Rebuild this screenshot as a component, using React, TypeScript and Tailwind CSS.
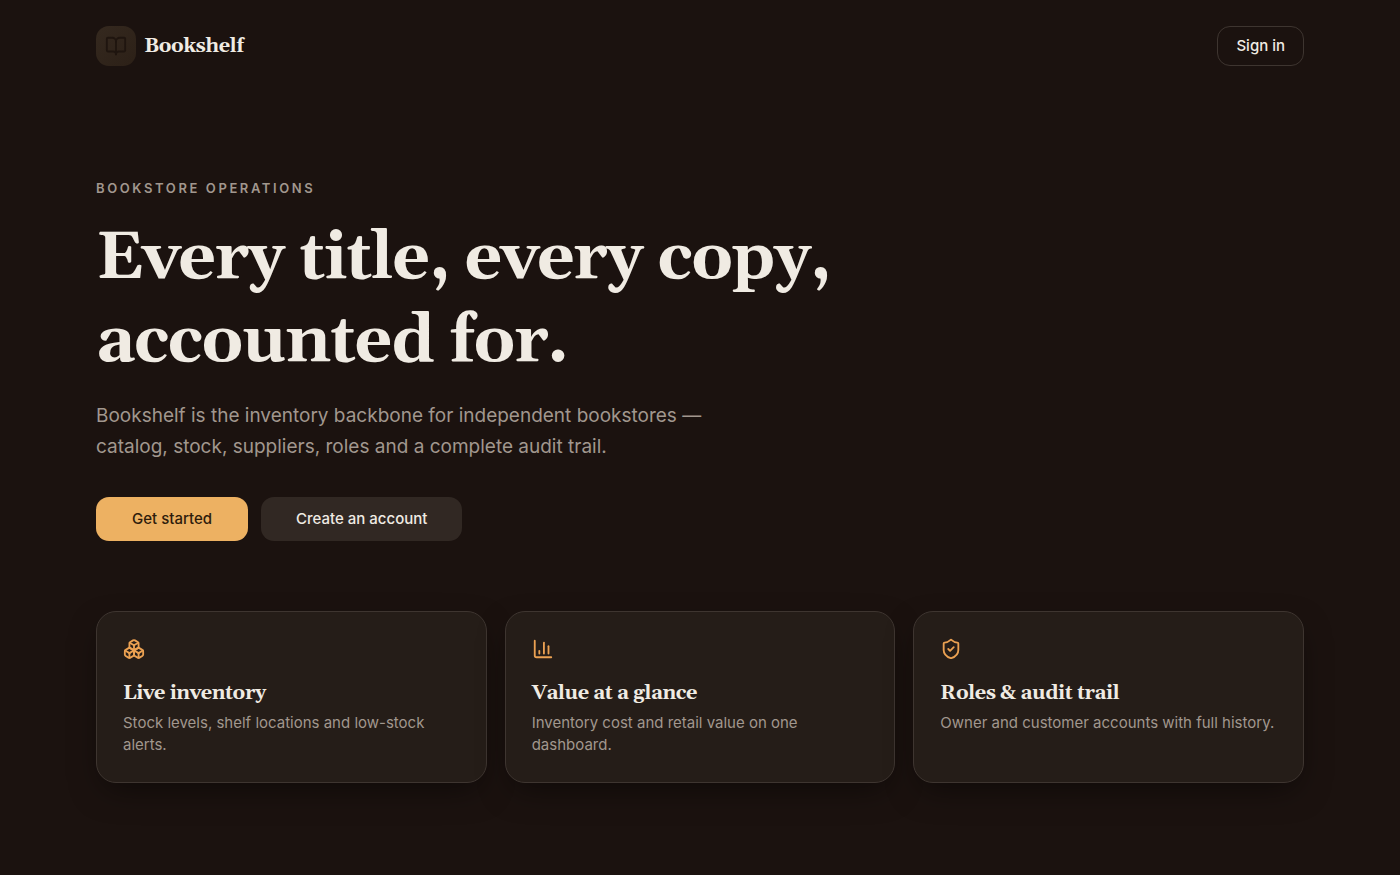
import React from 'react';
import { BookOpen, Boxes, ShieldCheck } from 'lucide-react';

interface IconProps {
  className?: string;
  strokeWidth?: number;
}

interface FeatureCardProps {
  icon: React.ComponentType<IconProps>;
  title: string;
  description: string;
}

function ChartIcon({ className = '', strokeWidth = 2 }: IconProps) {
  return (
    <svg
      className={className}
      fill="none"
      stroke="currentColor"
      strokeWidth={strokeWidth}
      strokeLinecap="round"
      strokeLinejoin="round"
      viewBox="0 0 24 24"
      aria-hidden="true"
    >
      <path d="M3 3v16a2 2 0 0 0 2 2h16" />
      <path d="M18 17V9" />
      <path d="M13 17V5" />
      <path d="M8 17v-3" />
    </svg>
  );
}

const features: FeatureCardProps[] = [
  {
    icon: Boxes,
    title: 'Live inventory',
    description: 'Stock levels, shelf locations and low-stock alerts.',
  },
  {
    icon: ChartIcon,
    title: 'Value at a glance',
    description: 'Inventory cost and retail value on one dashboard.',
  },
  {
    icon: ShieldCheck,
    title: 'Roles & audit trail',
    description: 'Owner and customer accounts with full history.',
  },
];

function FeatureCard({ icon: Icon, title, description }: FeatureCardProps) {
  return (
    <article className="rounded-[20px] border border-[#3e3530] bg-[#251d18] p-[26px] shadow-[0_12px_32px_-8px_rgba(0,0,0,0.5)]">
      <Icon className="h-[22px] w-[22px] text-[#eba152]" strokeWidth={2} />
      <h2 className="mt-5 font-['Gelasio','Georgia','Liberation_Serif',serif] text-[20px] leading-[26px] font-bold tracking-[-0.02em] text-[#f0ebe3]">
        {title}
      </h2>
      <p className="mt-[6px] text-[15px] leading-[22px] text-[#a1978e]">{description}</p>
    </article>
  );
}

export default function App() {
  return (
    <div className="min-h-screen bg-[#1b120f] font-['Inter',sans-serif] text-[#f0ebe3]">
      <div className="mx-auto max-w-[1256px] px-6">
        <header className="flex items-center justify-between pt-[26px]">
          <a href="#" className="flex items-center gap-2">
            <span className="flex h-10 w-10 items-center justify-center rounded-[13px] bg-linear-to-br from-[#35291f] to-[#2c2017] text-[#1f150f]">
              <BookOpen className="h-[22px] w-[22px]" strokeWidth={2} />
            </span>
            <span className="font-['Gelasio','Georgia','Liberation_Serif',serif] text-[20px] leading-7 font-bold tracking-[-0.02em]">
              Bookshelf
            </span>
          </a>
          <button type="button" className="h-10 rounded-[13px] border border-[#3e3530] px-[18px] text-[15px] font-medium">
            Sign in
          </button>
        </header>

        <main className="pt-28 pb-20">
          <p className="text-[13px] leading-5 font-semibold tracking-[0.2em] text-[#a1978e] uppercase">
            Bookstore operations
          </p>
          <h1 className="mt-5 max-w-[820px] font-['Gelasio','Georgia','Liberation_Serif',serif] text-[66px] leading-[83px] font-bold tracking-[-0.02em]">
            Every title, every copy, accounted for.
          </h1>
          <p className="mt-4 max-w-[620px] text-[19px] leading-[31px] text-[#a1978e]">
            Bookshelf is the inventory backbone for independent bookstores — catalog, stock, suppliers, roles and a
            complete audit trail.
          </p>
          <div className="mt-[35px] flex flex-wrap gap-[13px]">
            <button type="button" className="h-11 rounded-[13px] bg-[#edb162] px-9 text-[15px] font-medium text-[#2e1c0c]">
              Get started
            </button>
            <button type="button" className="h-11 rounded-[13px] bg-[#312823] px-[35px] text-[15px] font-medium">
              Create an account
            </button>
          </div>

          <section className="mt-[70px] grid gap-[18px] md:grid-cols-3">
            {features.map((feature) => (
              <FeatureCard key={feature.title} {...feature} />
            ))}
          </section>
        </main>
      </div>
    </div>
  );
}
